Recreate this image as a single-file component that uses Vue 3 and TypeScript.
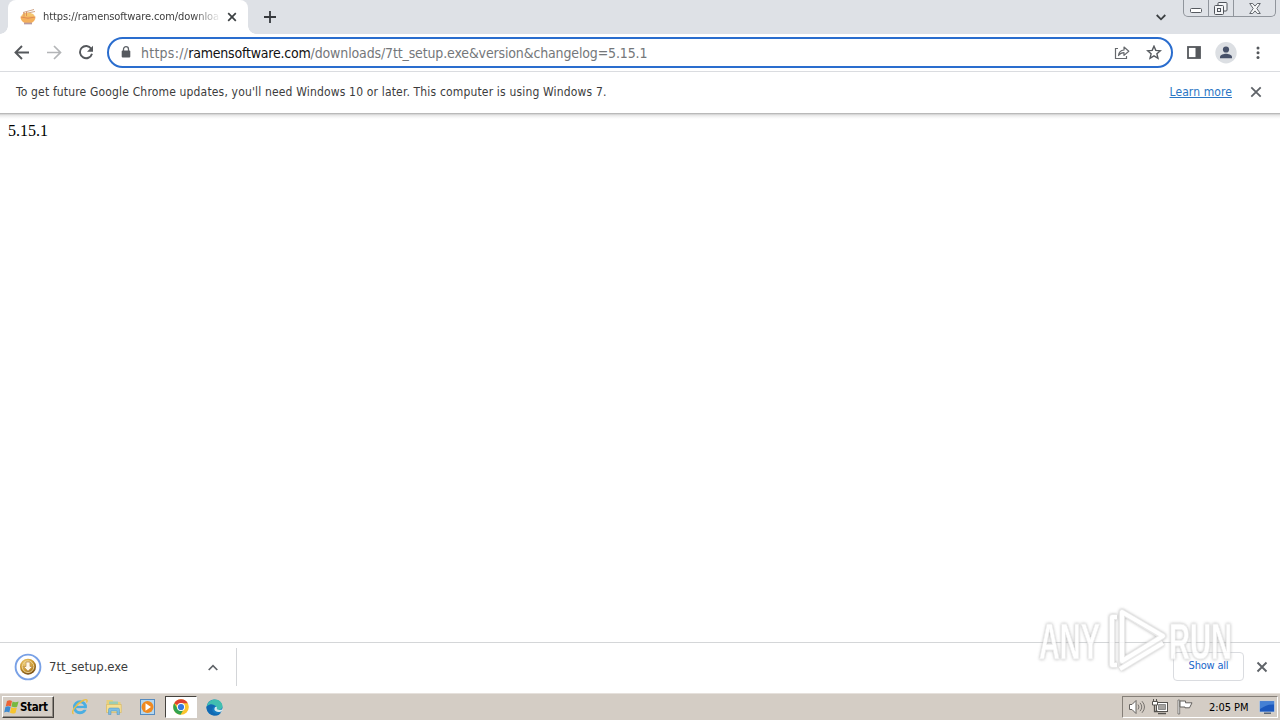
<script setup lang="ts">
import { ref } from 'vue'

const tabTitle = ref<string>('https://ramensoftware.com/downloads')
const host = 'ramensoftware.com'
const path = '/downloads/7tt_setup.exe&version&changelog=5.15.1'
const notice = "To get future Google Chrome updates, you'll need Windows 10 or later. This computer is using Windows 7."
</script>

<template>
  <div class="screen">
    <header class="tabs">
      <div class="tab">
        <svg class="fav" width="18" height="18" viewBox="0 0 18 18">
          <path d="M4 4.5 15 1.5M4 6 16 3.5" stroke="#c99a78" stroke-width=".9" />
          <ellipse cx="9" cy="7.8" rx="6.5" ry="3" fill="#f5c56e" />
          <path d="M1.5 8.5h15c0 3.6-2 5.5-4 6.5h-7c-2-1-4-2.900-4-6.500z" fill="#f4b05c" />
          <path d="M2 9q7 2.500 14 0M5 4.500v4M7.500 4v4" stroke="#dc8752" stroke-width=".9" fill="none" />
          <path d="M5 15.500h8" stroke="#b79aa0" stroke-width="1.700" />
        </svg>
        <span class="title">{{ tabTitle }}</span>
        <svg class="tab-x" width="10" height="10" viewBox="0 0 10 10"><path d="M1.2 1.2l7.6 7.6M8.8 1.2 1.2 8.8" stroke="#3c4043" stroke-width="1.7" /></svg>
      </div>
      <svg class="plus" width="12" height="12" viewBox="0 0 12 12"><path d="M6 0v12M0 6h12" stroke="#36393d" stroke-width="1.8" /></svg>
      <svg class="chev" width="10" height="7" viewBox="0 0 10 7"><path d="M.7 1 5 5.3 9.3 1" fill="none" stroke="#3c4043" stroke-width="1.8" /></svg>
      <div class="win">
        <span class="wmin"><svg width="12" height="6" viewBox="0 0 12 6"><rect x=".5" y=".5" width="11" height="4" rx="1" fill="#fff" stroke="#565a60" /></svg></span>
        <span class="wmax"><svg width="14" height="13" viewBox="0 0 14 13" fill="#f4f5f7" stroke="#50545b"><rect x="4" y=".5" width="9" height="8.5" rx="1" /><rect x=".5" y="3.5" width="9" height="9" rx="1" /><rect x="3.5" y="6.5" width="3" height="3" /></svg></span>
        <span class="wcls"><svg width="12" height="11" viewBox="0 0 12 11"><path d="M.7.5h3L6 3.1 8.3.5h3L7.8 5.5l3.5 5h-3L6 7.9l-2.3 2.6h-3l3.5-5z" fill="#f6f7f8" stroke="#565a60" stroke-width=".9" /></svg></span>
      </div>
    </header>

    <div class="toolbar">
      <svg class="back" width="16" height="16" viewBox="0 0 16 16"><path d="M15 7.500H2M8 1 1.500 7.500 8 14" fill="none" stroke="#55585c" stroke-width="1.900" /></svg>
      <svg class="fwd" width="16" height="16" viewBox="0 0 16 16"><path d="M1 7.500h13M8 1 14.500 7.500 8 14" fill="none" stroke="#b3b5b7" stroke-width="1.700" /></svg>
      <svg class="reload" width="16" height="16" viewBox="0 0 16 16"><path d="M13.2 3.700A6.100 6.100 0 1 0 14 8.800" fill="none" stroke="#55585c" stroke-width="1.900" /><path d="M15 .7v6H9z" fill="#55585c" /></svg>
      <div class="omni">
        <svg class="lock" width="10" height="13" viewBox="0 0 10 13"><path d="M2.5 6V3.200a2.500 2.500 0 0 1 5 0V6" fill="none" stroke="#5f6368" stroke-width="1.3" /><rect x=".7" y="4.600" width="8.600" height="7" rx="1" fill="#55595e" /></svg>
        <span class="url"><i>https://</i><b>{{ host }}</b>{{ path }}</span>
        <svg class="share" width="16" height="15" viewBox="0 0 16 15" fill="none" stroke="#66696d" stroke-width="1.2"><path d="M4 3.5H1.5v10h11V11" /><path d="M4.5 10.5c.4-3.8 2.3-5.3 5.5-5.5V2l4.8 4.2L10 10.4V7.7c-2.4 0-4.1.8-5.5 2.8z" stroke-linejoin="round" /></svg>
        <svg class="star" width="16" height="16" viewBox="0 0 16 16"><path d="M8 1.2l1.8 4.2 4.6.4-3.5 3 1.1 4.5L8 10.900l-4 2.4 1.1-4.5-3.5-3 4.6-.4z" fill="none" stroke="#55595e" stroke-width="1.4" /></svg>
      </div>
      <svg class="panel" width="14" height="14" viewBox="0 0 14 14"><rect x="1" y="1" width="12" height="11" fill="none" stroke="#55585c" stroke-width="1.8" /><path d="M8.5 1H13v11H8.5z" fill="#55585c" /></svg>
      <svg class="user" width="22" height="22" viewBox="0 0 22 22"><circle cx="11" cy="10.700" r="10.700" fill="#dcdfe3" /><circle cx="11" cy="7.5" r="3.1" fill="#475169" /><path d="M5 16.2v-1.3C5 12.700 9 11.700 11 11.700s6 1 6 3.2v1.3z" fill="#475169" /></svg>
      <svg class="dots" width="4" height="14" viewBox="0 0 4 14" fill="#55585c"><circle cx="2" cy="2" r="1.5" /><circle cx="2" cy="6.800" r="1.5" /><circle cx="2" cy="11.600" r="1.5" /></svg>
    </div>

    <div class="info">
      <span class="notice">{{ notice }}</span>
      <span class="learn">Learn more</span>
      <svg width="12" height="12" viewBox="0 0 12 12"><path d="M1.3 1.3l9.4 9.4M10.7 1.3l-9.4 9.4" stroke="#5f6368" stroke-width="1.8" /></svg>
    </div>

    <main class="page">5.15.1</main>

    <div class="shelf">
      <svg class="dl" width="28" height="28" viewBox="0 0 28 28">
        <defs><radialGradient id="gold" cx=".4" cy=".3" r=".7"><stop offset="0" stop-color="#f8dd8b" /><stop offset=".6" stop-color="#cc982d" /><stop offset="1" stop-color="#754d16" /></radialGradient></defs>
        <circle cx="14" cy="14" r="12.4" fill="#fff" stroke="#79a1e6" stroke-width="1.9" />
        <circle cx="14" cy="13.700" r="8" fill="url(#gold)" />
        <circle cx="14" cy="13.700" r="5.8" fill="none" stroke="#ecd49a" />
        <path d="M12 9h4v4.5h2.5L14 18.2l-4.5-4.700H12z" fill="#fff8e8" stroke="#b58745" stroke-width=".7" />
      </svg>
      <span class="file">7tt_setup.exe</span>
      <svg class="up" width="10" height="7" viewBox="0 0 10 7"><path d="M.7 6 5 1.7 9.3 6" fill="none" stroke="#5f6368" stroke-width="1.7" /></svg>
      <i class="sep"></i>
      <span class="showall">Show all</span>
      <svg class="shelf-x" width="12" height="12" viewBox="0 0 12 12"><path d="M1.5 1.5l9 9M10.5 1.5l-9 9" stroke="#5f6368" stroke-width="1.9" /></svg>
    </div>

    <footer class="taskbar">
      <div class="start">
        <svg width="16" height="16" viewBox="0 0 16 15"><path d="M3 1.500c2-1.2 3.5-1 5 0L6.8 7C5 5.9 3.5 6 1.7 7z" fill="#ec6335" /><path d="M8.600 2c2 1 3.500.8 6 0l-1.5 5.200c-2 .9-3.5.7-5.700-.2z" fill="#77b940" /><path d="M1.400 7.500c2-1.1 3.300-1 5.200 0L5.300 13c-1.800-1-3.2-1-5.1 0z" fill="#3e8ad0" /><path d="M7.200 7.800c1.900.9 3.7 1 5.7.1l-1.400 5.500c-2 1-3.6.8-5.500-.1z" fill="#f6c42e" /></svg>
        <span>Start</span>
      </div>
      <div class="launch ie">
        <svg width="18" height="18" viewBox="0 0 18 18"><circle cx="9" cy="9.300" r="5.5" fill="none" stroke="#4aaee2" stroke-width="3" /><path d="M5 9h10" stroke="#4aaee2" stroke-width="2.3" /><path d="M10.500 11h6" stroke="#d4cdc5" stroke-width="1.5" /><path d="M2.5 16C-1 14 6 5.5 12 2.5c3.5-1.8 5.2-.8 3.4 2" fill="none" stroke="#eabf45" stroke-width="1.4" /></svg>
      </div>
      <div class="launch">
        <svg width="18" height="18" viewBox="0 0 18 18"><path d="M1.500 2h6l1 2h7v10h-14z" fill="#e8cf7a" /><path d="M4 3.500h9v5H4z" fill="#9bcdb3" /><path d="M1.5 6.5h14.8V14.500H1.5z" fill="#f6df91" stroke="#d5b65d" stroke-width=".6" /><path d="M3.500 16.500v-5q0-1.5 1.5-1.5h8q1.5 0 1.5 1.5v5H12v-3.500H6v3.500z" fill="#7cbde3" stroke="#4e91bd" stroke-width=".5" /></svg>
      </div>
      <div class="launch media">
        <svg width="18" height="18" viewBox="0 0 18 18"><rect x="1.5" y="1.5" width="14" height="15" fill="#b4d7ef" stroke="#558bc0" /><circle cx="8.500" cy="9" r="6" fill="#f08a20" /><path d="M6.500 5.300 12 9l-5.500 3.700z" fill="#fff" /></svg>
      </div>
      <div class="active">
        <svg width="16" height="16" viewBox="0 0 16 16"><circle cx="8" cy="8" r="7.8" fill="#fbc52e" /><path d="M8 8 1.2 4.2A7.8 7.8 0 0 1 14.8 4.2H8z" fill="#df4131" /><path d="M1.2 4.2A7.8 7.8 0 0 0 7.5 15.8L11 9.8 8 8 4.7 10z" fill="#32a350" /><circle cx="8" cy="8" r="4" fill="#fff" /><circle cx="8" cy="8" r="3.1" fill="#3679df" /></svg>
      </div>
      <div class="launch edge">
        <svg width="17" height="17" viewBox="0 0 17 17"><circle cx="8.5" cy="8.5" r="8" fill="#167bc2" /><path d="M.7 7.5C1.8 2.8 5 .5 9 .5c4.7 0 7.5 3.5 7.5 6.8 0 2.7-2.5 4-5 3.7-1.7-.3-1.2-1-1-2C10.5 5.8 4.5 4 .7 7.5z" fill="#41bfb0" /><path d="M.6 7.5C4 4.3 8 5.2 9 7.5c-2.6.2-3.7 3.6-1.5 6 2 2 5.5 1.6 7.5.2-3 4.4-9 3.2-11.5.5C1 12 .2 10 .6 7.5z" fill="#1269b2" /><path d="M9.2 8c-1.6 2.2-.8 4.6 3.2 5 1.5.1 2.6-.5 3.7-1.1L17 10c-2 1.3-6 1.2-6.2-.2.3-.6.2-1.3-.2-2z" fill="#d4eaf0" /></svg>
      </div>
      <div class="tray">
        <svg class="vol" width="18" height="16" viewBox="0 0 18 16"><path d="M1.5 5.5H4L8 1.5v13l-4-4H1.5z" fill="#fff" stroke="#65625f" /><path d="M10 5.5q2 2.5 0 5M12 3.8q3.5 4.2 0 8.4M14 2.2q5 5.8 0 11.6" fill="none" stroke="#77736f" /></svg>
        <svg class="net" width="17" height="16" viewBox="0 0 17 16"><rect x="4.5" y="3.5" width="11" height="9" fill="#fff" stroke="#55534f" /><path d="M6.500 5.500h7v5h-7z" fill="#a4a29f" stroke="#777" stroke-width=".8" /><path d="M6 14.5h8" stroke="#55534f" stroke-width="1.5" /><path d="M2.500 6v6.500H6" fill="none" stroke="#55534f" stroke-width="1.300" /><path d="M.5 2.500h5v3.500h-5zM1.500 0v2.500M4.500 0v2.500" fill="#fff" stroke="#55534f" /></svg>
        <svg class="flag" width="17" height="16" viewBox="0 0 17 16"><path d="M1 1v14h1.700V1z" fill="#fff" stroke="#65625f" stroke-width=".8" /><path d="M3 2h5.500v1.800H15l-2.500 5H8V8H3z" fill="#fff" stroke="#65625f" /></svg>
        <span class="clock">2:05 PM</span>
        <svg class="desk" width="16" height="15" viewBox="0 0 16 15"><path d="M.5 1h15v11H.5z" fill="#1c58bd" stroke="#c5d5e7" stroke-width=".7" /><path d="M1 1.500h14v3Q8 4 1 9z" fill="#4580d4" /><path d="M5 13.200h7" stroke="#43536a" stroke-width="1.3" /></svg>
      </div>
    </footer>

    <svg class="mark" width="220" height="84" viewBox="0 0 220 84">
      <text class="word" x="9" y="55" textLength="61" lengthAdjust="spacingAndGlyphs">ANY</text>
      <text class="word" x="139" y="55" textLength="63" lengthAdjust="spacingAndGlyphs">RUN</text>
      <g fill="none" stroke-linejoin="round">
        <path class="halo" d="M87 13h-5v48h5M92 8v49l41-25zM92 8l41 25M90 65l43-26" />
        <path class="core" d="M87 13h-5v48h5M92 8v49l41-25zM90 65l43-26" />
      </g>
    </svg>
  </div>
</template>

<style>
body { overflow: hidden; background: #fff; }
</style>
<style scoped>
.screen { position: relative; width: 1280px; height: 720px; display: flex; flex-direction: column; background: #fff; overflow: hidden; font-family: "DejaVu Sans Condensed", "DejaVu Sans", sans-serif; font-stretch: condensed; color: #3c3c3c; }
.screen * { box-sizing: border-box; }
svg { display: block; flex: none; }
span { white-space: nowrap; }
.tabs { height: 34px; flex: none; display: flex; background: #dee1e6; align-items: flex-start; padding-left: 8px; }
.tab { width: 240px; height: 34px; display: flex; align-items: center; background: #fff; border-radius: 8px 8px 0 0; padding-left: 11px; position: relative; }
.tab::before, .tab::after { content: ""; position: absolute; bottom: 0; width: 8px; height: 8px; }
.tab::before { left: -8px; background: radial-gradient(circle at 0 0, transparent 7.5px, #fff 8px); }
.tab::after { right: -8px; background: radial-gradient(circle at 100% 0, transparent 7.5px, #fff 8px); }
.title { margin-left: 6px; width: 176px; overflow: hidden; font-size: 11px; letter-spacing: -.1px; line-height: 16px; -webkit-mask-image: linear-gradient(90deg, #000 150px, transparent 178px); }
.tab-x { margin-left: 8px; }
.plus { margin: 11px 0 0 16px; }
.chev { margin: 14px 0 0 auto; }
.win { margin: 0 4px 0 17px; width: 93px; height: 17px; display: flex; border: 1px solid #90959c; border-top: 0; border-radius: 0 0 5px 5px; background: #dfe2e7; }
.win span { display: flex; justify-content: center; align-items: flex-start; }
.wmin { width: 25px; padding-top: 8px; border-right: 1px solid #90959c; }
.wmax { width: 25px; padding-top: 2px; border-right: 1px solid #90959c; }
.wcls { width: 41px; padding-top: 3px; }
.toolbar { height: 38px; flex: none; display: flex; align-items: center; border-bottom: 1px solid #dadce0; padding-left: 14px; }
.fwd { margin-left: 16px; }
.reload { margin-left: 16px; }
.omni { margin-left: 13px; width: 1066px; height: 31px; border: 2px solid #2a6dce; border-radius: 16px; display: flex; align-items: center; padding: 0 9px 0 12px; }
.url { margin-left: 10px; font-size: 14px; letter-spacing: -.14px; color: #74777a; line-height: 20px; }
.url i { font-style: normal; letter-spacing: .25px; }
.url b { font-weight: 400; color: #111; letter-spacing: -.2px; }
.share { margin-left: auto; }
.star { margin-left: 16px; }
.panel { margin-left: 14px; }
.user { margin-left: 14px; }
.dots { margin-left: 19px; }
.info { height: 41px; flex: none; display: flex; align-items: center; padding: 0 18px 1px 16px; font-size: 12px; }
.notice { letter-spacing: .165px; }
.learn { margin-left: auto; margin-right: 18px; letter-spacing: .1px; color: #2a76c4; text-decoration: underline; }
.page { flex: 1; padding: 9px 8px; font-family: "Liberation Serif", serif; font-size: 16px; line-height: 18px; color: #000; background: linear-gradient(#aaa 0, #c8c8c8 1px, #e5e5e5 2px, #f5f5f5 4px, #fff 6px); }
.shelf { height: 51px; flex: none; display: flex; align-items: center; border-top: 1px solid #d4d6d8; padding: 0 12px 2px 14px; }
.file { margin-left: 7px; font-size: 13px; letter-spacing: -.06px; width: 159px; padding-bottom: 1px; }
.sep { width: 1px; height: 38px; background: #d3d5d8; margin-left: 18px; }
.showall { margin-left: auto; margin-bottom: 1px; width: 71px; height: 29px; border: 1px solid #dadce0; border-radius: 4px; text-align: center; line-height: 26px; font-size: 11px; letter-spacing: -.2px; color: #1b67c9; }
.shelf-x { margin-left: 12px; }
.taskbar { height: 27px; flex: none; display: flex; align-items: center; background: #d4cdc5; border-top: 1px solid #e6e1dc; padding-left: 2px; }
.start { width: 52px; height: 22px; display: flex; align-items: center; padding-left: 1px; border: 1px solid; border-color: #fff #45423e #45423e #fff; box-shadow: inset -1px -1px #918b84; color: #000; font-size: 11.5px; font-weight: 700; letter-spacing: -.35px; }
.launch { width: 18px; margin-left: 16px; }
.active { width: 32px; height: 22px; display: flex; align-items: center; justify-content: center; margin-left: 8px; background: #fff; border: 1px solid; border-color: #45423e #fff #fff #45423e; }
.edge { margin-left: 9px; }
.tray { margin-left: auto; margin-right: 2px; width: 156px; height: 22px; display: flex; align-items: center; border: 1px solid; border-color: #857f78 #fff #fff #857f78; padding-left: 5px; }
.net { margin-left: 6px; }
.flag { margin-left: 8px; }
.clock { margin-left: 15px; width: 42px; color: #000; font-size: 11px; letter-spacing: -.05px; }
.desk { margin-left: 8px; }
.ie { margin-left: 17px; }
.mark { position: absolute; left: 1030px; top: 604px; opacity: .85; filter: drop-shadow(0 0 1.5px #aaa); }
.word { font: 700 50px "Liberation Sans", sans-serif; fill: #fff; stroke: #ededed; stroke-width: .8; }
.halo { stroke: #e6e6e6; stroke-width: 6; }
.core { stroke: #fff; stroke-width: 4; }
</style>
